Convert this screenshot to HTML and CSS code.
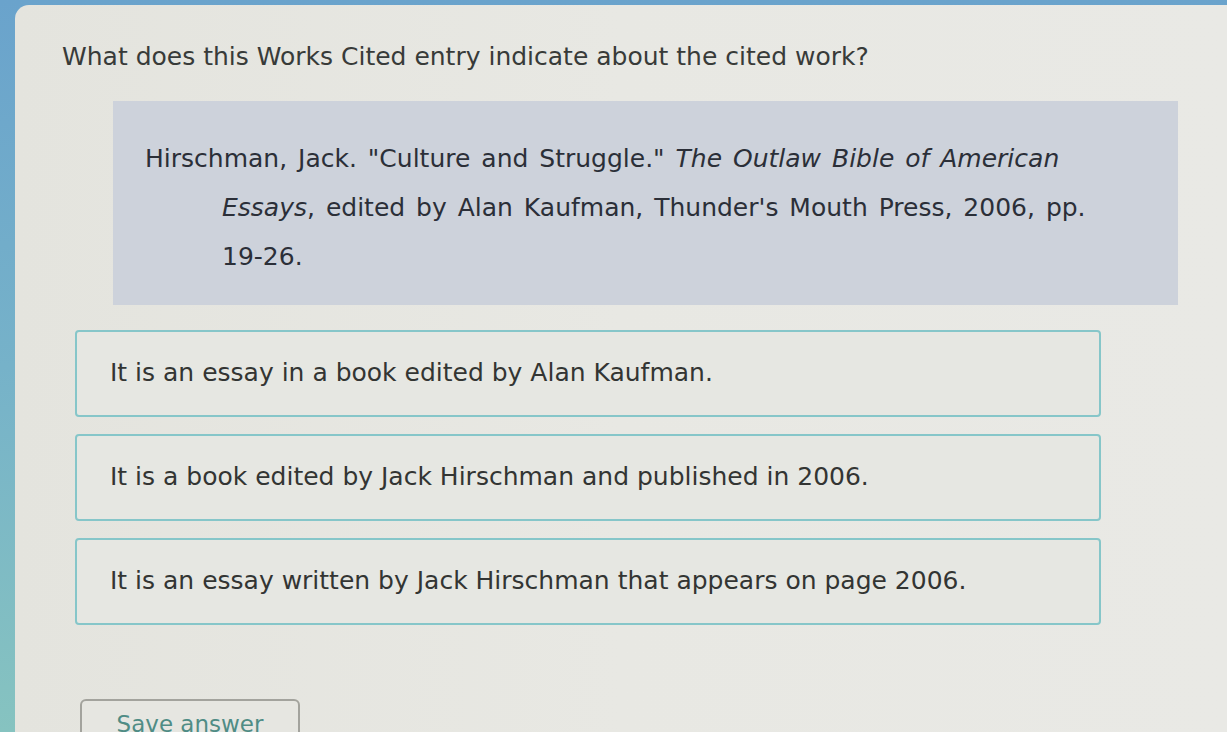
FILE: index.html
```html
<!DOCTYPE html>
<html lang="en">
<head>
<meta charset="utf-8">
<title>Works Cited question</title>
<link rel="stylesheet" href="styles.css">
</head>
<body>
<main class="panel">
  <h1 class="question">What does this Works Cited entry indicate about the cited work?</h1>
  <div class="citation">
    <p class="citation-text">Hirschman, Jack. "Culture and Struggle." <em>The Outlaw Bible of American Essays</em>, edited by Alan Kaufman, Thunder's Mouth Press, 2006, pp. 19-26.</p>
  </div>
  <div class="options">
    <button class="option" type="button">It is an essay in a book edited by Alan Kaufman.</button>
    <button class="option" type="button">It is a book edited by Jack Hirschman and published in 2006.</button>
    <button class="option" type="button">It is an essay written by Jack Hirschman that appears on page 2006.</button>
  </div>
  <div class="actions">
    <button class="save" type="button">Save answer</button>
  </div>
</main>
</body>
</html>
```

FILE: styles.css
```css
html, body {
  margin: 0;
  padding: 0;
  height: 100%;
  overflow: hidden;
}
body {
  background: linear-gradient(180deg, #6aa3cc 0%, #76b2c9 50%, #86c3c0 100%);
  font-family: "DejaVu Sans", Verdana, sans-serif;
}
.panel {
  margin: 5px 0 0 15px;
  height: 727px;
  box-sizing: border-box;
  background: linear-gradient(90deg, #e4e4de 0%, #e8e8e3 50%, #e9e9e5 100%);
  border-top-left-radius: 14px;
  padding: 38px 0 0 47px;
}
.question {
  margin: 0;
  font-size: 25px;
  font-weight: normal;
  line-height: 28px;
  color: #383b39;
}
.citation {
  margin: 30px 49px 0 51px;
  background: #cdd2db;
  padding: 33px 48px 24px 32px;
}
.citation-text {
  margin: 0;
  font-size: 25px;
  line-height: 49px;
  color: #2b2f38;
  word-spacing: 3px;
  padding-left: 77px;
  text-indent: -77px;
}
.citation-text em {
  font-style: italic;
}
.options {
  margin: 25px 0 0 13px;
  width: 1026px;
  display: flex;
  flex-direction: column;
  gap: 17px;
}
.option {
  display: block;
  height: 87px;
  box-sizing: border-box;
  text-align: left;
  padding: 0 0 2px 33px;
  background: #e6e7e2;
  border: 2px solid #86c6c9;
  border-radius: 4px;
  font-family: "DejaVu Sans", Verdana, sans-serif;
  font-size: 25px;
  color: #333533;
}
.actions {
  margin: 74px 0 0 18px;
}
.save {
  width: 220px;
  height: 50px;
  box-sizing: border-box;
  background: #e6e6e1;
  border: 2px solid #a3a39d;
  border-radius: 6px;
  padding: 10px 0 0 0;
  font-family: "DejaVu Sans", Verdana, sans-serif;
  font-size: 23px;
  line-height: 26px;
  color: #4f8c85;
  display: flex;
  justify-content: center;
  align-items: flex-start;
}
```
